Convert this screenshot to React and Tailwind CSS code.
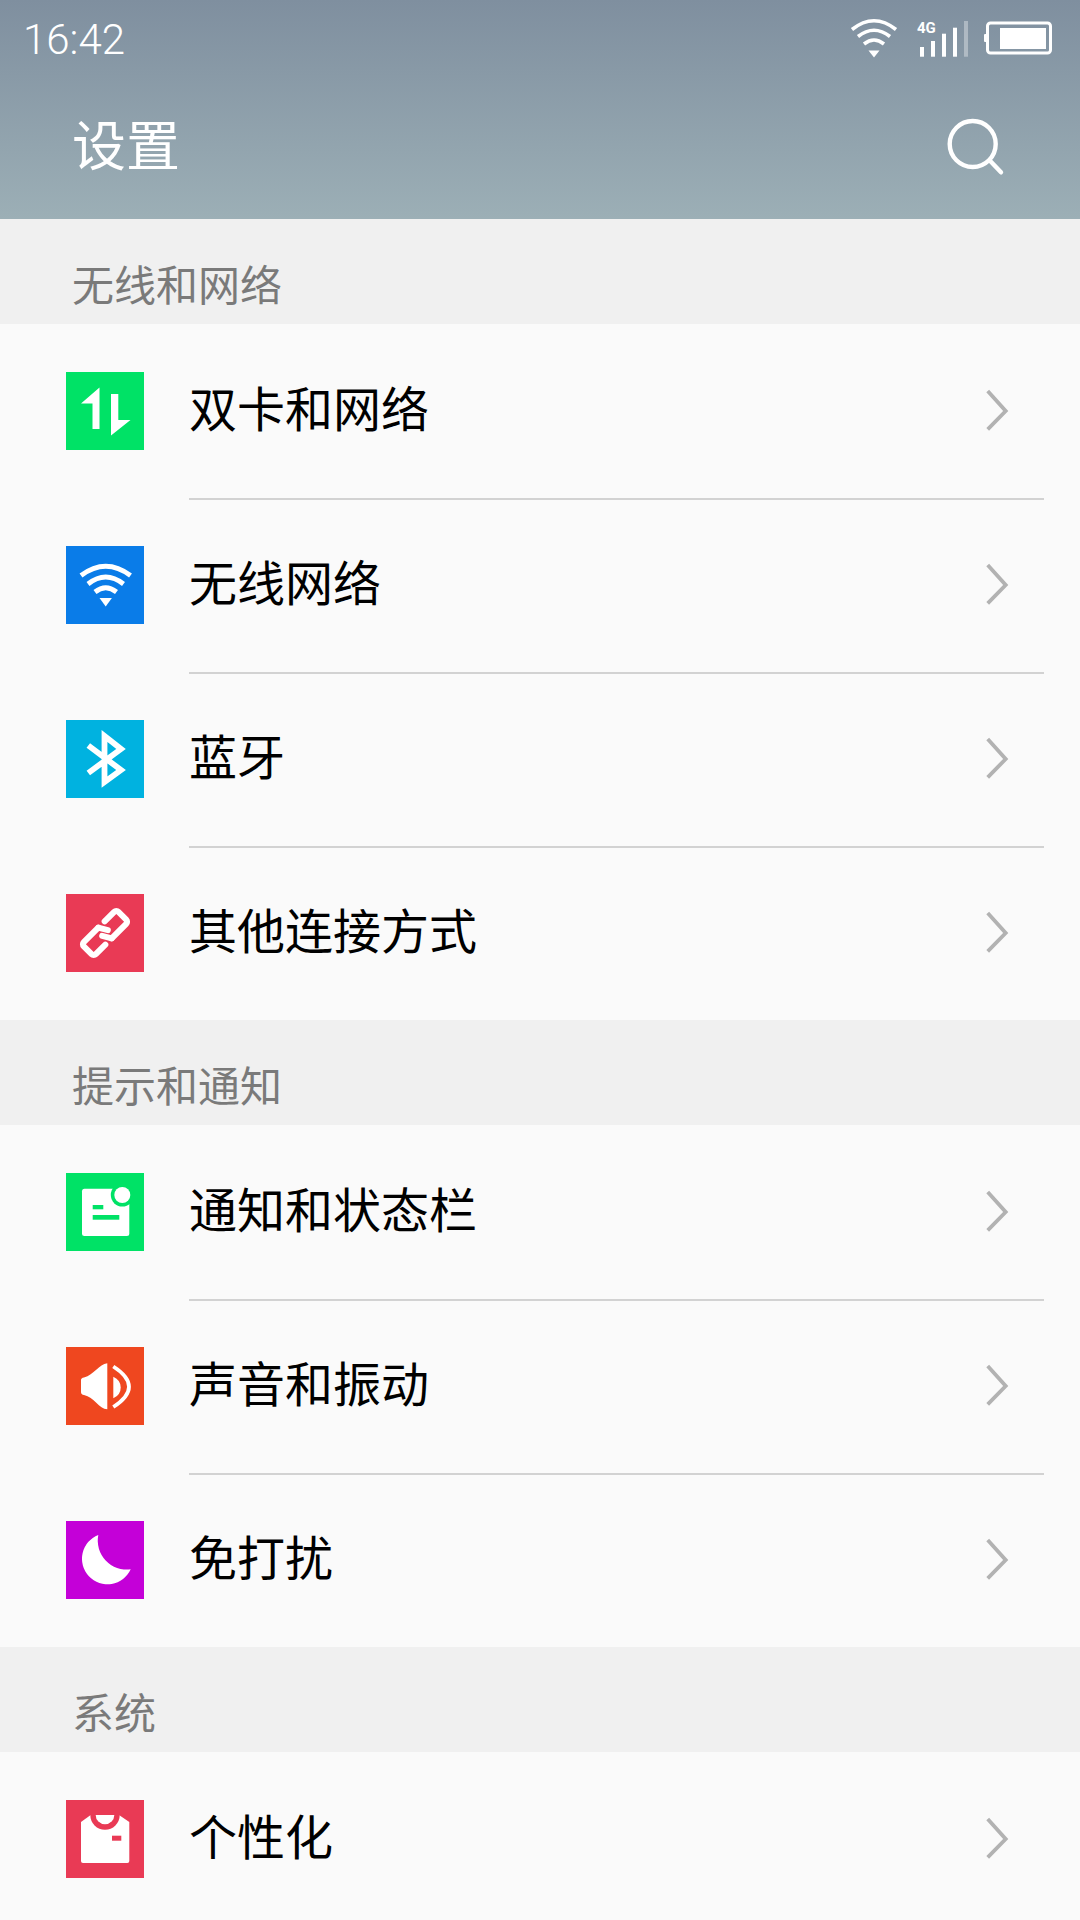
const cjk = { fontFamily: '"Noto Sans CJK SC", "Noto Sans", sans-serif' };

const Tile = ({ bg, children }) => (
  <svg width="78" height="78" viewBox="0 0 78 78" className={`shrink-0 ${bg}`}>
    {children}
  </svg>
);

const DataIcon = () => (
  <Tile bg="bg-[#00e266]">
    <path d="M33.5 15.5V57h-7V31.5H15z" fill="#fff" />
    <path d="M45 22H52.3v26H64.5L45 63.5z" fill="#fff" />
  </Tile>
);

const WifiIcon = () => (
  <Tile bg="bg-[#0a7ce8]">
    <g fill="none" stroke="#fff" strokeWidth="4.8">
      <path d="M15 29.5Q39.7 11 64.5 29.5" />
      <path d="M22 38Q39.7 24 57.5 38" />
      <path d="M29 46Q39.7 37.5 50.5 46" />
    </g>
    <path d="M33.5 52h12.4L39.7 60.5z" fill="#fff" />
  </Tile>
);

const BluetoothIcon = () => (
  <Tile bg="bg-[#00b2e0]">
    <path
      d="M22.3 25.5L55 50L38.5 62V16L55 29L22.3 53"
      fill="none"
      stroke="#fff"
      strokeWidth="5.8"
    />
  </Tile>
);

const LinkIcon = () => (
  <Tile bg="bg-[#e93a55]">
    <g
      fill="none"
      stroke="#fff"
      strokeWidth="6"
      strokeLinejoin="round"
      strokeLinecap="round"
      transform="rotate(-45 39 39)"
    >
      <path d="M38 30.5H17.5a3 3 0 0 0-3 3v11a3 3 0 0 0 3 3H31" />
      <path d="M47 30.5H60.5a3 3 0 0 1 3 3v11a3 3 0 0 1-3 3H40" />
      <path d="M38 30.5L43 39" />
      <path d="M40 47.5L35 39" />
    </g>
  </Tile>
);

const NoticeIcon = () => (
  <Tile bg="bg-[#00e266]">
    <rect x="16" y="15.7" width="47.3" height="47.3" rx="2.5" fill="#fff" />
    <circle cx="56.3" cy="22" r="11.5" fill="#00e266" />
    <circle cx="56.3" cy="22" r="8" fill="#fff" />
    <rect x="26.7" y="32" width="10.6" height="4.3" fill="#00e266" />
    <rect x="26.7" y="42" width="26.6" height="4.7" fill="#00e266" />
  </Tile>
);

const SoundIcon = () => (
  <Tile bg="bg-[#ef471f]">
    <path
      d="M15 33Q15 31 18 30.5C28 28 33 17 41.3 16.3V62.3C33 62 28 50 18 48Q15 47.5 15 45z"
      fill="#fff"
    />
    <path d="M47.3 29.7Q54.7 33 54.7 40.5T47.3 51.3z" fill="#fff" />
    <path d="M47.3 19.5Q78.7 39.7 47.3 60" fill="none" stroke="#fff" strokeWidth="3.8" />
  </Tile>
);

const MoonIcon = () => (
  <Tile bg="bg-[#c400d8]">
    <path d="M32.3 14A25.5 25.5 0 1 0 64.7 48.3A29 29 0 0 1 32.3 14z" fill="#fff" />
  </Tile>
);

const ShirtIcon = () => (
  <Tile bg="bg-[#e93a55]">
    <path
      d="M15 22L24.7 15H53L63.3 22V61a2 2 0 0 1-2 2H17a2 2 0 0 1-2-2z"
      fill="#fff"
    />
    <path d="M24.3 15a14.7 14.7 0 0 0 29.4 0z" fill="#e93a55" />
    <path d="M29.7 15a9.3 9.3 0 0 0 18.6 0z" fill="#fff" />
    <rect x="46" y="35.7" width="9.3" height="5" fill="#e93a55" />
  </Tile>
);

const Chevron = () => (
  <svg width="24" height="44" viewBox="0 0 24 44" className="shrink-0">
    <path d="M2.7 2L20.7 22L2.7 40.3" fill="none" stroke="#b2b2b2" strokeWidth="3.8" />
  </svg>
);

const StatusIcons = () => (
  <svg width="212" height="46" viewBox="845 14 212 46">
    <g fill="none" stroke="#fff" strokeWidth="3.6">
      <path d="M852 28.5Q874 11 896 28.5" />
      <path d="M858 35.5Q874 23 890 35.5" />
      <path d="M864 43Q874 35 884 43" />
    </g>
    <path d="M868.5 49.5h11L874 56.5z" fill="#fff" />
    <text x="917" y="32" fill="#fff" fontSize="15" fontWeight="700" fontFamily="Roboto, sans-serif">
      4G
    </text>
    <g fill="#fff">
      <rect x="920" y="46" width="4" height="9.7" />
      <rect x="931" y="40" width="4" height="15.7" />
      <rect x="942" y="32.7" width="4" height="23" />
      <rect x="953" y="26.7" width="4" height="29" />
      <rect x="964" y="20" width="4" height="35.7" fillOpacity="0.35" />
    </g>
    <rect x="987.5" y="22" width="63" height="30" rx="3" fill="none" stroke="#fff" strokeWidth="3" />
    <rect x="984" y="33" width="3" height="8" rx="1" fill="#fff" />
    <rect x="1000" y="27" width="46" height="21" fill="#fff" />
  </svg>
);

const SearchIcon = () => (
  <svg width="60" height="60" viewBox="0 0 60 60" className="shrink-0">
    <circle cx="27.7" cy="27" r="23" fill="none" stroke="#fff" strokeWidth="4.4" />
    <path d="M45 43.7L56 55.3" fill="none" stroke="#fff" strokeWidth="4.4" strokeLinecap="round" />
  </svg>
);

const sections = [
  {
    title: '无线和网络',
    items: [
      { label: '双卡和网络', Icon: DataIcon },
      { label: '无线网络', Icon: WifiIcon },
      { label: '蓝牙', Icon: BluetoothIcon },
      { label: '其他连接方式', Icon: LinkIcon },
    ],
  },
  {
    title: '提示和通知',
    items: [
      { label: '通知和状态栏', Icon: NoticeIcon },
      { label: '声音和振动', Icon: SoundIcon },
      { label: '免打扰', Icon: MoonIcon },
    ],
  },
  {
    title: '系统',
    items: [{ label: '个性化', Icon: ShirtIcon }],
  },
];

const Row = ({ label, Icon, first }) => (
  <div className="flex h-[174px] shrink-0 items-center bg-[#fafafa] pl-[66px]">
    <Icon />
    <div
      className={`ml-[45px] mr-[36px] flex h-full flex-1 items-center justify-between pr-[35px] ${
        first ? '' : 'border-t-2 border-[#d2d2d2] pb-[2px]'
      }`}
    >
      <span className="pb-[10px] text-[48px] leading-[60px] text-black">{label}</span>
      <Chevron />
    </div>
  </div>
);

export default function App() {
  return (
    <div className="flex h-[1920px] w-[1080px] flex-col overflow-hidden bg-[#fafafa]" style={cjk}>
      <header className="h-[219px] shrink-0 bg-gradient-to-b from-[#7f8f9f] to-[#9cafb6] text-white">
        <div className="flex h-[73px] items-start justify-between pl-[23px] pr-[23px] pt-[15px]">
          <span className="text-[42px] font-light leading-[50px] [font-family:Roboto,sans-serif]">
            16:42
          </span>
          <StatusIcons />
        </div>
        <div className="flex h-[146px] items-start justify-between pl-[72px] pr-[75px]">
          <span className="pt-[39px] text-[54px] leading-[62px]">设置</span>
          <div className="pt-[44px]">
            <SearchIcon />
          </div>
        </div>
      </header>
      {sections.map((section) => (
        <section key={section.title} className="flex shrink-0 flex-col">
          <div className="flex h-[105px] items-end bg-[#f0f0f0] pb-[20px] pl-[72px]">
            <span className="text-[42px] leading-[42px] text-[#7a7a7a]">{section.title}</span>
          </div>
          {section.items.map((item, i) => (
            <Row key={item.label} label={item.label} Icon={item.Icon} first={i === 0} />
          ))}
        </section>
      ))}
    </div>
  );
}
